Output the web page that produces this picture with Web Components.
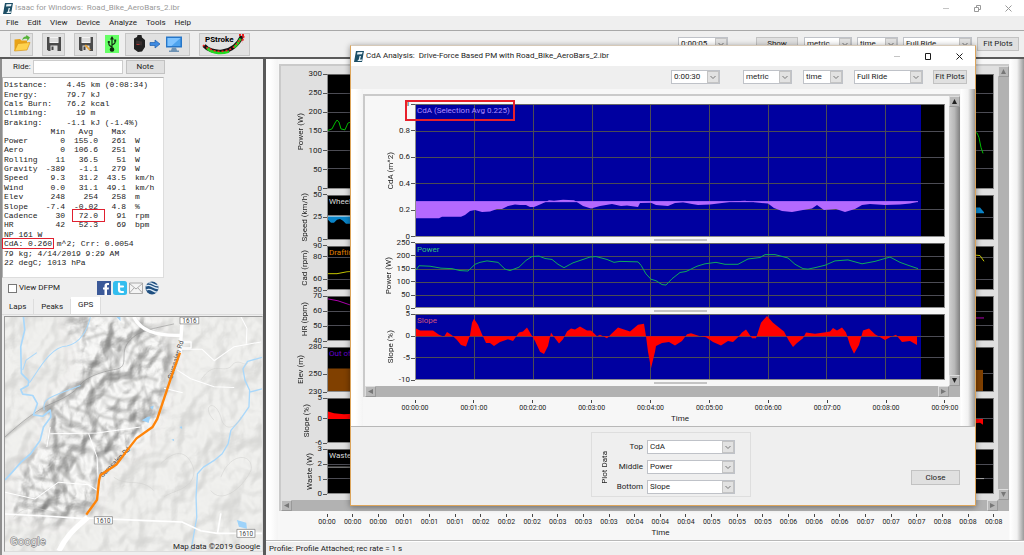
<!DOCTYPE html>
<html lang="en">
<head>
<meta charset="utf-8">
<title>Isaac for Windows</title>
<style>
  html, body { margin: 0; height: 100%; }
  body { font: 8px/10px Roboto, "Open Sans", sans-serif; color: #1c1c1c; background: #efefef; overflow: hidden; }
</style>
</head>
<body>
<isaac-app></isaac-app>
<script>
const define = (name, markup, setup) => {
  const template = document.createElement('template');
  template.innerHTML = '<style>*{box-sizing:border-box}button,input,select{font:inherit;color:inherit;margin:0;border-radius:0}</style>' + markup;
  customElements.define(name, class extends HTMLElement {
    constructor() {
      super();
      this.attachShadow({ mode: 'open' }).append(template.content.cloneNode(true));
    }
    connectedCallback() {
      if (setup && !this.ready) { this.ready = true; setup(this, this.shadowRoot); }
    }
  });
};

define('app-logo', `
<style>:host{display:block;width:10px;height:11px}svg{display:block}</style>
<svg width="10" height="11" viewBox="0 0 10 11" aria-hidden="true">
  <path d="M2 0h8L8 11H0z" fill="#1d4f66"/>
  <path d="M3.4 1.2 8.6 1 8 3.2 3 3.4zM5.6 5H7L6 8.400 8.200 8.600 7.600 10H3.200L4.800 8.600z" fill="#eaf4f8"/>
</svg>`);

define('window-title', `
<style>
:host{display:flex;align-items:center;background:#fff;color:var(--title,#1c1c1c);padding-left:3px}
h1{margin:0 auto 0 2px;font:inherit;white-space:pre}
button{border:0;background:none;padding:0;width:31px;height:16px;display:grid;place-items:center}
.min{color:#c4c4c4}
</style>
<app-logo></app-logo><h1><slot></slot></h1>
<button class="min" aria-label="Minimize"><svg width="7" height="7"><path d="M0 3.5h6" stroke="currentColor"/></svg></button>
<button aria-label="Restore"><svg class="sq" width="7" height="7" fill="none" stroke="currentColor"></svg></button>
<button aria-label="Close window"><svg width="7" height="7"><path d="M.5.5l6 6M6.5.5l-6 6" stroke="currentColor"/></svg></button>`,
(host, root) => {
  root.querySelector('.sq').innerHTML = host.hasAttribute('restored')
    ? '<path d="M.5 2.5h4v4h-4zM2.5 2V.5h4v4H5"/>' : '<path d="M.5.5h5v6h-5z"/>';
});

define('menu-bar', `
<style>
:host{display:block;border-bottom:1px solid #a8a8a8;height:15px}
nav{display:flex;gap:9px;padding:2px 6px 0}
a{color:inherit;text-decoration:none}
</style>
<nav><a href="#file">File</a><a href="#edit">Edit</a><a href="#view">View</a><a href="#device">Device</a><a href="#analyze">Analyze</a><a href="#tools">Tools</a><a href="#help">Help</a></nav>`);

define('push-button', `
<style>
:host{display:block;height:14px}
button{width:100%;height:100%;border:1px solid #c2c2c2;background:#e0e0e0;padding:0;white-space:nowrap;line-height:10px;text-align:center}
</style>
<button><slot></slot></button>`);

define('combo-box', `
<style>
:host{display:grid;height:14px;grid-template-columns:1fr 12px;background:#fff;border:1px solid #bfc2c8}
select{grid-area:1/1/2/3;appearance:none;border:0;background:none;padding:0 12px 0 2px;width:100%;height:12px;line-height:10px}
svg{grid-area:1/2;pointer-events:none;background:#e2e2e2;border:1px solid #c4c4c4;width:12px;height:12px}
</style>
<select></select>
<svg viewBox="0 0 10 10" fill="none" stroke="#777"><path d="M2.5 4 5 6.5 7.5 4"/></svg>`,
(host, root) => {
  const select = root.querySelector('select');
  select.add(new Option(host.getAttribute('value')));
  select.setAttribute('aria-label', host.getAttribute('label'));
});

define('tool-bar', `
<style>
:host{display:flex;align-items:center;height:26px;padding:0 5px 0 10px}
.tool{height:23px;width:23px;border:1px solid #c6c6c6;background:#e1e1e1;padding:0;display:grid;place-items:center;margin-right:9px}
.usb{width:14px;height:18px;background:#66ff66;border:0;margin:0 6px 0 -1px}
.device{width:65px}
.stroke{width:51px}
.wide{flex:1}
.a{width:50px}.b{width:42px;margin:0 6px 0 28px}.c{width:48px}.d{width:41px;margin:0 5px}.e{width:69px;margin-right:5px}.f{width:42px}
.c,.d,.e,.f,.a,.b{flex:none}
text{font:bold 8px Roboto,sans-serif}
svg{display:block}
</style>
<button class="tool" aria-label="Open ride"><svg width="18" height="18" viewBox="0 0 18 18"><path d="M1.5 16V4.5L7 4l1.5 1.5H14V9z" fill="#e8a317"/><path d="M1.5 16 5 8.5 17 7.5 14 15z" fill="#ffd24d" stroke="#d9961a" stroke-width=".7"/><path d="M9 5c1-3 3-4 4-3.500L13.500 0 17 2.500 14.500 6l-.4-2c-2-.5-3 0-5.100 1z" fill="#55b33a"/></svg></button>
<button class="tool" aria-label="Save ride"><svg width="16" height="16" viewBox="0 0 16 16"><path d="M1 1h14v14H2.500L1 13.500z" fill="#4a4a4a"/><path d="M3.500 1h9v6h-9z" fill="#f4f4f4"/><path d="M3.500 3h9M3.500 5h9" stroke="#bbb" stroke-width=".8"/><path d="M4.500 9.500h7V15h-7z" fill="#ddd"/><path d="M5.500 10.500h2V14h-2z" fill="#444"/></svg></button>
<button class="tool" aria-label="Save ride as"><svg width="16" height="16" viewBox="0 0 16 16"><path d="M1 1h14v14H2.500L1 13.500z" fill="#4a4a4a"/><path d="M3.500 1h9v6h-9z" fill="#f4f4f4"/><path d="M3.500 3h9M3.500 5h9" stroke="#bbb" stroke-width=".8"/><path d="M4.500 9.500h7V15h-7z" fill="#ddd"/><path d="M5.500 10.500h2V14h-2z" fill="#444"/><path d="M8 8.500 13 14l-2 .3-4.500-4.800z" fill="#e7a234"/></svg></button>
<button class="tool usb" aria-label="USB device"><svg width="10" height="16" viewBox="0 0 10 16" fill="none" stroke="#102a10" stroke-width="1.2"><path d="M5 2v11M5 11C2 9.500 1.800 9 1.800 7M5 9c3-1.500 3.200-2 3.200-4"/><circle cx="5" cy="13.5" r="1.7" fill="#102a10"/><path d="M5 0 3 3.500h4z" fill="#102a10" stroke="none"/><path d="M.8 5h2v2h-2zM7.200 3.500h2v2h-2z" fill="#102a10" stroke="none"/></svg></button>
<button class="tool device" aria-label="Download from device"><svg width="54" height="18" viewBox="0 0 54 18"><path d="M3 3.500 6 2l.5-2h4l.5 2.500L14 5v7l-3 4.500L7 17l-4-3z" fill="#222"/><path d="M5 5.500l6 1v4l-6-1z" fill="#3a3030"/><path d="M5.500 9.500h3" stroke="#a33" stroke-width="1"/><path d="M19 7.500h5V5l5 4-5 4v-2.500h-5z" fill="#3f8ae0" stroke="#1d5fae" stroke-width=".7"/><path d="M35 1.500h16v11H35z" fill="#2676c8"/><path d="M36.500 3h13v8h-13z" fill="#4da3ee"/><path d="M41 12.500h4l1 3h2V17H38v-1.500h2z" fill="#6e93b5"/><path d="M36.500 3h13l-9 8h-4z" fill="#7fc3ff"/></svg></button>
<button class="tool stroke" aria-label="PStroke"><svg width="47" height="21" viewBox="0 0 47 21"><path d="M3 11.500C10 20 32 22 41 2" fill="none" stroke="#111" stroke-width="4"/><path d="M6 14c3 3 6 4 9 4.500M33 13.500c4-3 5-6 6.500-9" fill="none" stroke="#1fdc1f" stroke-width="2.5"/><path d="M15 18.500c4 1 9 .3 13-1" fill="none" stroke="#1fdc1f" stroke-width="2.5"/><path d="M2 11c8 7 28 12 37-6" fill="none" stroke="#e22" stroke-width="1.6" stroke-dasharray="2 2"/><path d="M38 1l5 0-2 7" fill="none" stroke="#e22" stroke-width="2" stroke-dasharray="2 1"/><text x="4" y="8">PStroke</text></svg></button>
<span class="wide"></span>
<combo-box class="a" label="Averaging" value="0:00:05"></combo-box>
<push-button class="b">Show</push-button>
<combo-box class="c" label="Units" value="metric"></combo-box>
<combo-box class="d" label="Axis" value="time"></combo-box>
<combo-box class="e" label="Range" value="Full Ride"></combo-box>
<push-button class="f">Fit Plots</push-button>`);

define('ride-summary', `
<style>
:host{display:block;width:162px;height:201px;background:#fff;border:1px solid #ddd;border-top-color:#b4b4b4;border-left-color:#b4b4b4;padding:2px 1px;font:8px/9px "Liberation Mono",monospace;color:#222}
.lines{display:flex;flex-direction:column;justify-content:space-around;white-space:pre}
.top{height:47px}.foot{height:37px}
table{border-collapse:collapse;table-layout:fixed;width:155px;height:103px}
th,td{padding:0;font-weight:400;text-align:right;line-height:8px;white-space:nowrap}
th:first-child,td:last-child{text-align:left}
td:last-child{padding-left:9px}
.avg{padding-right:5px}
mark{background:none;color:inherit;outline:1px solid #e02030}
td mark{padding:1px 6px;margin:0 -6px}
.foot mark{padding:0 1px;margin:0 -1px}
</style>
<div class="lines top"><span>Distance:    4.45 km (0:08:34)</span><span>Energy:      79.7 kJ</span><span>Cals Burn:   76.2 kcal</span><span>Climbing:      19 m</span><span>Braking:     -1.1 kJ (-1.4%)</span></div>
<table><colgroup><col style="width:37px"><col style="width:24px"><col style="width:33px"><col style="width:28px"><col></colgroup><tbody></tbody></table>
<div class="lines foot"><span>NP 161 W</span><span><mark>CdA: 0.260</mark> m^2; Crr: 0.0054</span><span>79 kg; 4/14/2019 9:29 AM</span><span>22 degC; 1013 hPa</span></div>`,
(host, root) => {
  const rows = ['Power|0|155.0|261|W', 'Aero|0|106.6|251|W', 'Rolling|11|36.5|51|W', 'Gravity|-389|-1.1|279|W', 'Speed|9.3|31.2|43.5|km/h',
    'Wind|0.0|31.1|49.1|km/h', 'Elev|248|254|258|m', 'Slope|-7.4|-0.02|4.8|%', 'Cadence|30|72.0|91|rpm', 'HR|42|52.3|69|bpm'];
  root.querySelector('tbody').innerHTML = '<tr><th></th><th>Min</th><th class="avg">Avg</th><th>Max</th><th></th></tr>' + rows.map(line => {
    const [name, min, avg, max, unit] = line.split('|');
    return `<tr><th>${name}</th><td>${min}</td><td>${name === 'Cadence' ? `<mark>${avg}</mark>` : avg}</td><td>${max}</td><td>${unit}</td></tr>`;
  }).join('');
});

define('share-links', `
<style>:host{display:flex;gap:2px}a,svg{display:block}</style>
<a href="#facebook" aria-label="Facebook"><svg width="14" height="14" viewBox="0 0 14 14"><path d="M0 0h14v14H0z" fill="#3b5998"/><path d="M7.500 14V8.500H6v-2h1.500V5c0-2 1-3 2.700-3H12v2h-1c-.8 0-1 .4-1 1v1.500h2l-.3 2H10V14z" fill="#fff"/></svg></a>
<a href="#twitter" aria-label="Twitter"><svg width="14" height="14" viewBox="0 0 14 14"><rect width="14" height="14" rx="2.5" fill="#33bdee"/><path d="M6 2.500v6c0 1.500.8 2.500 2.300 2.500H10M6 5.500h4" fill="none" stroke="#fff" stroke-width="2.2" stroke-linecap="round"/></svg></a>
<a href="#mail" aria-label="Email"><svg width="14" height="14" viewBox="0 0 14 14" fill="#f4f4f4" stroke="#999" stroke-width=".8"><path d="M.5 2h13v10.500H.5z"/><path d="M.5 2.500 7 8l6.500-5.500M.5 12 5 7M13.500 12 9 7" fill="none"/></svg></a>
<a href="#earth" aria-label="Google Earth"><svg width="14" height="14" viewBox="0 0 14 14"><circle cx="7" cy="7" r="6.5" fill="#1f4f80"/><path d="M1 5c4-3 7 3 12.500 2.500M1.500 9c4-3 7 3 11 2M3.500 2C7 1 9 5 13 4.500" fill="none" stroke="#dbe9f5" stroke-width="1.3"/></svg></a>`);

define('route-map', `
<style>
:host{display:block;border:1px solid #9a9a9a;border-right-color:#ddd;border-bottom-color:#ddd;background:#f0efed;min-height:0}
svg{display:block;width:100%;height:100%}
text{font-family:Roboto,sans-serif}
</style>
<svg viewBox="15 21 768 700" preserveAspectRatio="xMidYMid slice" role="img" aria-label="Ride route map">
  <defs>
    <filter id="relief" x="0" y="0" width="100%" height="100%" color-interpolation-filters="sRGB">
      <feTurbulence type="fractalNoise" baseFrequency=".012 .01" numOctaves="3" seed="11"/>
      <feColorMatrix values="0 0 0 0 0 0 0 0 0 0 0 0 0 0 0 1 0 0 0 0"/>
      <feDiffuseLighting surfaceScale="50" lighting-color="#fff"><feDistantLight azimuth="225" elevation="62"/></feDiffuseLighting>
      <feComponentTransfer><feFuncR type="linear" slope=".48" intercept=".5"/><feFuncG type="linear" slope=".48" intercept=".5"/><feFuncB type="linear" slope=".48" intercept=".495"/></feComponentTransfer>
    </filter>
    <filter id="soft" x="-20%" y="-20%" width="140%" height="140%"><feGaussianBlur stdDeviation="16"/></filter>
    <filter id="ridge" x="-10%" y="-10%" width="120%" height="120%"><feGaussianBlur stdDeviation="3"/></filter>
    <mask id="hills"><path d="M0 0H800V740H0z" fill="#3a3a3a"/><path d="M200 20H440L520 140 480 300 430 400 310 480 280 600 160 640 20 600 60 480 150 380 130 280 240 200z" fill="#fff" filter="url(#soft)"/></mask>
  </defs>
  <path d="M15 21h768v700H15z" fill="#efeeec"/>
  <g mask="url(#hills)"><path d="M15 21h768v700H15z" filter="url(#relief)"/></g>
  <g fill="none" stroke="#a4a4a2" stroke-width="7" opacity=".6" filter="url(#ridge)" stroke-linecap="round">
    <path d="M238 226 285 190 345 172 368 120 404 76 430 52M15 380 80 330 140 290 200 262 240 230M250 90l60-20 50 20M380 160l20-50 50-30M440 110l-40 60M300 250l60 20 60-10M210 290l60 20 50 60M160 420l60 20 30 60M100 500l60 10 60 50M180 350l60 30M320 360l20 60 20 30M60 560l70 10 60 40M370 220l60-20 40 10M270 300l40 20 50 10M170 310l30 20 40 10M120 450l50 20 40 40M300 400l10 40 30 30M80 530l50 10 50 40M420 150l40 0 20-30"/>
  </g>
  <g fill="none" stroke="#8c8c8c" stroke-width="2" opacity=".8"><path d="M15 380C70 330 110 300 150 282S220 250 238 226 300 185 345 178 355 130 384 96 440 60 520 42"/></g>
  <g fill="none" stroke="#a9d8fb" stroke-width="5" stroke-linejoin="round">
    <path d="M70 21 74 60 62 110 64 190 86 212 84 226 62 238 68 252 98 256 112 280 100 314 128 318 150 300 152 320 130 350 120 390 92 430 62 456 34 488 15 508"/>
    <path d="M270 21C262 60 240 100 200 108 150 108 110 190 88 218M68 180 78 150 110 128M132 300C126 262 150 262 240 226" stroke-width="3"/>
    <path d="M783 142 740 154 726 176 732 210 746 240 744 290 716 330 690 360 682 400 664 430 640 450 608 470 590 490 586 560 588 620 576 690 570 721M746 246 783 236" stroke-width="4"/>
  </g>
  <path d="M424 330 440 320 450 318 444 338zM448 290l12-4-4 12zM536 350l8-2v8zM512 388l8-2v6zM708 628l28 8 2 18-24-6zM348 21l12 12V21z" fill="#9ed3fa"/>
  <g fill="none" stroke="#cfcfcd" stroke-width="1.5"><path d="M640 330c-40-40 0-70 20-10 10 50 50 30 60 0M480 460c60-60 90-20 100 20 0 60-70 60-90 80M660 500c30-80 100-70 90-20-30 60-90 100-120 60M600 210c40-60 60-20 90-40 20-30 40 0 50-10M40 620c60-60 100 0 160-20M340 500c40 30 80 0 120 40"/></g>
  <g fill="none" stroke="#fff" stroke-linejoin="round">
    <path d="M400 21C420 60 460 78 540 76M545 21 538 130" stroke-width="10"/>
    <path d="M720 21l18 34-2 46M544 118h60l36 34 60-42 80-14M530 180l40 26 70 24 60 2M490 234l56 14M150 350l-10 60M150 370 290 368 420 350M265 370 290 440 294 520M15 545l90 20 70-50 90 8 24 16" stroke-width="3"/>
    <path d="M262 620C230 650 200 670 176 721" stroke-width="16"/>
    <path d="M250 622 440 630 544 634 600 660 650 668H783M650 668l10-60M15 610l120 6 120 8" stroke-width="5"/>
    <path d="M545 96h26v18h-28" stroke-width="4"/>
  </g>
  <g fill="#444" font-size="20"><text transform="translate(514 208) rotate(-73)">Gurnsalen Rd</text><text transform="translate(306 502) rotate(-45)">Gurnsalen Rd</text></g>
  <path d="M538 128 512 200 470 326 456 350 408 384 380 420 348 462 300 494 296 510 290 568 258 612" fill="none" stroke="#ff8408" stroke-width="7" stroke-linejoin="round"/>
  <g fill="#fff" stroke="#777" stroke-width="2"><path d="M538 22h56v20h-56zM282 618h54v22h-54zM708 656h54v24h-54z"/></g>
  <g fill="#444" font-size="19"><text x="545" y="39">1616</text><text x="288" y="636">1610</text><text x="714" y="675">1610</text></g>
  <text x="30" y="704" font-size="34" fill="#e4e4e4" stroke="#777" stroke-width="3" paint-order="stroke">Google</text>
  <text x="778" y="715" font-size="24" fill="#222" text-anchor="end">Map data ©2019 Google</text>
</svg>`);

define('side-panel', `
<style>
:host{display:flex;flex-direction:column;width:266px;flex:none;border-left:2px solid #8e8e8e;border-right:3px solid #5a5a5a;min-height:0}
.ride{display:flex;padding:1px 0 3px 11px}
label{display:flex;align-items:center;gap:2px}
.ride input{width:90px;height:14px;border:1px solid #ccc;padding:0;background:#fff}
push-button{width:39px;margin-left:3px}
.tools{display:flex;align-items:center;justify-content:space-between;height:20px;width:162px;padding:0 5px 0 6px}
.tools input{width:9px;height:9px;appearance:none;border:1px solid #777;background:#fff}
.tabs{display:flex;align-items:flex-end;height:17px;border-bottom:1px solid #ddd}
.tabs button{border:0;border-right:1px solid #ddd;background:#efefef;height:15px;padding:0 7px}
.tabs button[aria-selected=true]{background:#fff;height:17px;padding-bottom:2px}
route-map{flex:1;margin:1px 0 3px 2px}
</style>
<div class="ride"><label>Ride:<input type="text"></label><push-button>Note</push-button></div>
<ride-summary></ride-summary>
<div class="tools"><label><input type="checkbox">View DFPM</label><share-links></share-links></div>
<div class="tabs" role="tablist"><button role="tab">Laps</button><button role="tab">Peaks</button><button role="tab" aria-selected="true">GPS</button></div>
<route-map></route-map>`);

define('scroll-bar', `
<style>
:host{display:flex;justify-content:space-between;background:var(--track,#b2b2b2)}
:host([vertical]){flex-direction:column}
button{width:11px;height:11px;border:1px solid #999;border-top-color:#ddd;border-left-color:#ddd;background:#b8b8b8;padding:0;display:grid;place-items:center;flex:none;color:var(--arrow,#777)}
svg{display:block}
</style>
<button aria-label="Scroll back"><svg width="7" height="7" viewBox="0 0 7 7" fill="currentColor"><path/></svg></button>
<button aria-label="Scroll forward"><svg width="7" height="7" viewBox="0 0 7 7" fill="currentColor"><path/></svg></button>`,
(host, root) => {
  const shapes = host.hasAttribute('vertical') ? ['M3.5 1 6 6H1z', 'M3.5 6 6 1H1z'] : ['M1 3.5 6 1v5z', 'M6 3.5 1 1v5z'];
  root.querySelectorAll('path').forEach((path, i) => path.setAttribute('d', shapes[i]));
});

/* One strip: rotated name, value axis, and a plot whose series are slotted SVG. */
define('strip-chart', `
<style>
:host{display:grid;grid-template-columns:var(--gutter) minmax(0,1fr);flex:var(--grow,1) 1 0;min-height:0}
.scale{display:flex;justify-content:flex-end;gap:2px;min-height:0}
.name{writing-mode:vertical-rl;transform:rotate(180deg);align-self:center;white-space:nowrap;line-height:12px}
.ticks{display:flex;flex-direction:column}
.tick{height:0;display:flex;align-items:center;justify-content:flex-end;gap:1px}
.tick::after{content:"";width:4px;height:1px;background:#555}
.plot{display:grid;min-height:0;border:1px solid #8c8c8c;border-top-color:#666;background:#000}
.plot>*,::slotted(svg){grid-area:1/1;width:100%;height:100%;min-height:0;display:block}
.sel{background:#0000a0}
.legend{padding:1px 0 0 1px;width:auto;height:auto;justify-self:start;align-self:start;white-space:nowrap}
.grid{stroke:#4c4c54;shape-rendering:crispEdges}
</style>
<div class="scale"><span class="name"></span><div class="ticks"></div></div>
<div class="plot"><div class="sel"></div><svg class="grid"></svg><slot></slot><span class="legend"></span></div>`,
(host, root) => {
  const attr = name => host.getAttribute(name);
  const $ = sel => root.querySelector(sel);
  const values = attr('ticks').split(',').map(Number);
  host.style.setProperty('--grow', attr('grow') || 45);
  $('.name').textContent = attr('name');
  $('.legend').textContent = attr('legend') || '';
  $('.legend').style.color = attr('ink') || '#ddd';
  $('.sel').style.width = host.hasAttribute('selection') ? '95.7%' : '0';
  $('.ticks').innerHTML = values.map((v, i) =>
    (i ? `<i style="flex:${values[i - 1] - v} 1 0"></i>` : '') + `<span class="tick">${v}</span>`).join('');
  const top = values[0], span = top - values[values.length - 1];
  let lines = values.slice(1, -1).map(v => {
    const y = (top - v) / span * 100 + '%';
    return `<line x1="0" x2="100%" y1="${y}" y2="${y}"/>`;
  }).join('');
  if (host.hasAttribute('selection'))
    for (let i = 1; i < 9; i++) lines += `<line y1="0" y2="100%" x1="${i / 9 * 100}%" x2="${i / 9 * 100}%"/>`;
  $('.grid').innerHTML = lines;
});

define('time-axis', `
<style>
:host{display:block;padding:3px 15px 0 calc(var(--gutter) + 2px);text-align:center}
ol{display:flex;justify-content:space-between;list-style:none;margin:0;padding:0;height:13px;font-size:7px;line-height:10px}
li{width:0;display:flex;flex-direction:column;align-items:center;white-space:nowrap}
li::before{content:"";width:1px;height:3px;background:#444;flex:none}
p{margin:0;line-height:12px;height:13px}
</style>
<ol></ol><p>Time</p>`,
(host, root) => {
  const count = +host.getAttribute('count'), step = +host.getAttribute('step'), long = host.hasAttribute('long');
  root.querySelector('ol').innerHTML = Array.from({ length: count }, (_, i) => {
    const m = String(Math.floor(i * step / 60)).padStart(2, '0');
    return `<li>${long ? `00:${m}:00` : `00:${m}`}</li>`;
  }).join('');
});

define('chart-pane', `
<style>
:host{display:flex;flex:1;min-height:0;padding:5px 15px 0 var(--pane-left,12px);border-bottom:1px solid #b8b8b8;
  background:linear-gradient(90deg,#fff 4px,#f4f4f4 12px,transparent 12px,transparent calc(100% - 15px),#fff calc(100% - 14px),#f2f2f2 calc(100% - 7px),#9a9a9a 100%),#f7f7f7}
.frame{flex:1;min-width:0;display:grid;grid-template-columns:minmax(0,1fr) 11px;grid-template-rows:minmax(0,1fr) 11px auto;background:#f7f7f7;border:solid #cacaca;border-width:2px 0 0 2px}
.strips{display:flex;flex-direction:column;padding:8px 4px 0 0;background:var(--plot-area,#e0e0e0);min-height:0}
.corner{background:#b2b2b2}
time-axis{grid-column:1/3;margin-left:-2px;background:#f7f7f7}
</style>
<div class="frame">
  <div class="strips"><slot></slot></div>
  <scroll-bar vertical></scroll-bar>
  <scroll-bar style="--track:#b2b2b2;--arrow:#777"></scroll-bar><div class="corner"></div>
</div>`,
(host, root) => {
  const axis = document.createElement('time-axis');
  for (const name of ['count', 'step', 'long']) if (host.hasAttribute(name)) axis.setAttribute(name, host.getAttribute(name));
  root.querySelector('.frame').append(axis);
});

define('split-bar', `
<style>:host{display:flex;justify-content:center;height:6px;flex:none;padding:2px 0 0 var(--gutter)}hr{width:53px;height:2px;margin:0;border:0;background:var(--grip,transparent)}</style>
<hr>`);

const line = (points, color) => `<polyline points="${points}" fill="none" stroke="${color}" vector-effect="non-scaling-stroke"/>`;
const area = (points, base, color) => {
  const xs = points.split(' ').map(p => p.split(',')[0]);
  return `<polygon points="${xs[0]},${base} ${points} ${xs.at(-1)},${base}" fill="${color}"/>`;
};
const strip = (attrs, box, content) =>
  `<strip-chart ${attrs}><svg viewBox="${box}" preserveAspectRatio="none" aria-hidden="true">${content}</svg></strip-chart><split-bar></split-bar>`;

const cda = '416,219.5 439,219.5 442,218 461,218 465,216 470,212 475,211 482,213 490,212.5 497,210 502,210 508,207 515,205.5 520,206 526,206 530,208 534,208 540,205.5 545,203 549,201 554,201.5 563,200.5 574,201 578,203.5 583,207 591,209.5 600,207 612,205 621,207 627,206.5 638,208 640,204 651,203.5 656,206 668,207 675,204 683,203 692,205 698,206 710,205.5 722,204 735,202 745,201.5 755,203 768,204.5 774,209 782,212 792,213 803,211 812,209.5 817,206 824,211 836,210 845,213 855,210 862,206 870,205 885,206 900,205.5 910,204.5 918,202.5';
const power = '416,270 419,265.5 430,266 441,268 452,268.5 460,270.5 468,271 475,264 480,262 487,260.5 498,262 505,269 510,270.5 519,267 526,260 532,256 539,255.5 545,258 552,259 558,264 564,267.5 573,262.5 583,259 590,256.5 596,256 607,259 614,262 620,261 638,261.5 641,265 646,274 651,279.5 656,281 662,285 666,285.5 672,279 680,272.5 686,271.5 697,266 705,263.5 716,262 725,264 738,264 748,258.5 760,257 765,254 775,254 788,257.5 795,264 803,268.5 808,269 815,267.5 825,265 835,260.5 848,259.5 862,263.5 875,261 890,256.5 900,262 908,265 918,268.5';
const slope = '416,328 420,330 433,330 439,334.5 444,336.5 447,331.5 452,335 457,340 461,345 466,346.5 470,335 472,322 474,318 478,324 482,334 486,343 490,343 494,346 500,342 508,339 513,341 519,332 523,331 527,327 531,334 535,341 540,352 544,354.5 548,346 551,332 555,338 559,343.5 563,339 567,331 571,328 575,329 580,326 587,330 591,330 597,336 600,334.5 607,338 612,333 618,327 630,331 638,324 644,323 646,336 648,352 651,369 655,352 656,346 662,343 669,342 675,345.5 682,341 687,334 691,333 700,336 706,337 713,342 721,345.5 728,341 733,342 738,337 742,332 746,329 752,338 756,338 761,322 767,315 773,322 784,331 789,341 793,347 797,343 803,338 806,332 815,333.5 824,332 830,331 833,327.5 837,330 842,327 846,332 850,345 854,354 859,345 863,330 869,328 875,334 885,340 890,337 896,334.5 902,342 910,341 917,345';

define('ride-charts', `
<style>:host{display:flex;flex:1;min-width:0;min-height:0;--gutter:46px;--pane-left:13px}</style>
<chart-pane count="27" step="20">
${strip('name="Power (W)" ticks="300,250,200,150,100,50,0" grow="115"', '327 74 666 115', line('327,130.5 331,129 334,123 336,120 338,122 340,129 344,130 347,123 350,122 360,126', '#00c000') + line('970,133 977,133 979,138 981,148 983,154', '#00c000'))}
${strip('name="Speed (km/h)" ticks="50,25,0" legend="Wheel"', '327 194 666 45', area('327,219 330,222 333,222 336,219 339,218 342,220 345,223 349,223 351,221 360,221', 215, '#0a84c8') + line('327,215 360,215', '#fff') + area('970,206 980,206 984,211', 212, '#0a84c8'))}
${strip('name="Cad (rpm)" ticks="90,80,60,50" legend="Drafting" ink="#e08000"', '327 245 666 45', line('327,273 336,273 346,271 360,270', '#c8c800') + line('970,253 980,254 984,260', '#c8c800'))}
${strip('name="HR (bpm)" ticks="70,60,50,40"', '327 296 666 45', line('327,298 337,300 351,305 360,307', '#b000b0') + line('970,318 984,318', '#b000b0'))}
${strip('name="Elev (m)" ticks="280,250,230" legend="Out of" ink="#6400d2"', '327 347 666 45', area('327,368.5 360,368.5', 392, '#804000') + area('970,370 983,370', 392, '#804000'))}
${strip('name="Slope (%)" ticks="5,0,-6"', '327 397 666 45', area('327,410 333,412 343,413 360,412', 418, '#f00') + area('970,423 980,422 983,424', 418, '#f00'))}
${strip('name="Waste (W)" ticks="3,2,1,0" legend="Waste"', '327 448 666 45', line('327,466 360,466', '#aaa') + line('970,478 984,478', '#aaa'))}
</chart-pane>`);

define('plot-choice', `
<style>
:host{display:block}
fieldset{margin:0;border:1px solid #dedede;width:160px;height:65px;padding:7px 15px 0 7px;display:grid;grid-template-columns:12px 1fr 88px;grid-template-rows:14px 14px 14px;gap:6px 4px;align-items:center}
legend{float:left;padding:0;margin:0;grid-area:1/1/4/2;writing-mode:vertical-rl;transform:rotate(180deg);line-height:12px;white-space:nowrap}
span{text-align:right}
</style>
<fieldset><legend>Plot Data</legend>
<span>Top</span><combo-box label="Top" value="CdA"></combo-box>
<span>Middle</span><combo-box label="Middle" value="Power"></combo-box>
<span>Bottom</span><combo-box label="Bottom" value="Slope"></combo-box>
</fieldset>`);

define('analysis-dialog', `
<style>
:host{display:flex;flex-direction:column;background:#efefef;border:1px solid #dca55c;border-top-color:#d6c9b8;box-shadow:0 1px 6px #0006;--gutter:50px;--plot-area:#f7f7f7;--grip:#c4c4c4;--arrow:#222;--track:linear-gradient(90deg,#d0d0d0,#b8b8b8 50%,#808080)}
window-title{height:20px;flex:none}
.bar{display:flex;justify-content:flex-end;padding:4px 8px 5px 0;flex:none}
.t{width:49px}.u{width:49px;margin-left:23px}.x{width:40px;margin:0 11px}.r{width:69px;margin-right:10px}.fit{width:34px}
.flag{position:absolute;left:54px;top:54px;width:110px;height:21px;border:2px solid #e8202c}
.foot{display:grid;grid-template-columns:1fr auto 1fr;height:78px;flex:none;padding-top:5px}
plot-choice{padding-left:16px}
.foot push-button{justify-self:end;width:49px;height:15px;margin:38px 15px 0 0}
</style>
<window-title>CdA Analysis:  Drive-Force Based PM with Road_Bike_AeroBars_2.ibr</window-title>
<div class="bar"><combo-box class="t" label="Averaging" value="0:00:30"></combo-box><combo-box class="u" label="Units" value="metric"></combo-box><combo-box class="x" label="Axis" value="time"></combo-box><combo-box class="r" label="Range" value="Full Ride"></combo-box><push-button class="fit">Fit Plots</push-button></div>
<chart-pane count="10" step="60" long>
${strip('selection name="CdA (m^2)" ticks="1,0.8,0.6,0.4,0.2,0" grow="133" legend="CdA (Selection Avg 0.225)" ink="#b08cff"', '416 104 528 133', area(cda, 202.5, '#b469ff') + line('416,202.5 918,202.5', '#b469ff'))}
${strip('selection name="Power (W)" ticks="250,200,150,100,50,0" grow="66" legend="Power" ink="#35c07a"', '416 243 528 66', line(power, '#10a85c'))}
${strip('selection name="Slope (%)" ticks="5,0,-5,-10" grow="66" legend="Slope" ink="#d0507c"', '416 314 528 66', area(slope, 336, '#f00'))}
</chart-pane>
<div class="foot"><span></span><plot-choice></plot-choice><push-button>Close</push-button></div>
<div class="flag"></div>`);

define('isaac-app', `
<style>
:host{display:flex;flex-direction:column;height:100vh;position:relative}
.title{height:16px;--title:#999;flex:none;border-left:0}
menu-bar,tool-bar{flex:none}
.work{display:flex;flex:1;min-height:0;border-top:2px solid #5a5a5a}
main{flex:1;display:flex;flex-direction:column;min-width:0;background:#efefef}
.status{height:14px;line-height:13px;padding-left:3px;flex:none;border-top:1px solid #fff}
analysis-dialog{position:absolute;left:350px;right:48px;top:45px;bottom:49px}
</style>
<window-title class="title" restored>Isaac for Windows:  Road_Bike_AeroBars_2.ibr</window-title>
<menu-bar></menu-bar>
<tool-bar></tool-bar>
<div class="work"><side-panel></side-panel><main><ride-charts></ride-charts><div class="status">Profile: Profile Attached; rec rate = 1 s</div></main></div>
<analysis-dialog></analysis-dialog>`);
</script>
</body>
</html>
